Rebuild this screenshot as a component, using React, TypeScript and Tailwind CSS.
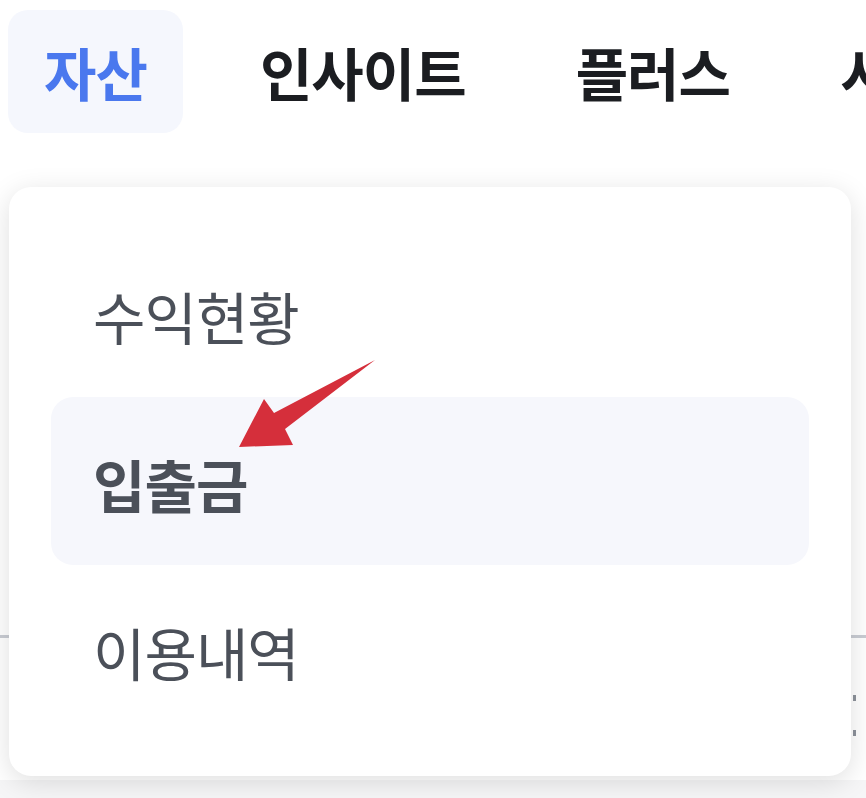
import { useState } from 'react';

const tabs = ['자산', '인사이트', '플러스', '시세'];
const menuItems = ['수익현황', '입출금', '이용내역'];

const App = () => {
  const [activeTab] = useState(0);
  const [selected] = useState(1);

  return (
    <div
      className="relative w-[866px] h-[798px] overflow-hidden bg-white"
      style={{ fontFamily: '"Noto Sans CJK KR", "Noto Sans", sans-serif' }}
    >
      {/* Content underneath the dropdown */}
      <div className="absolute left-0 right-0 top-[635px] h-[3px] bg-[#c9ccd3]" />
      <div className="absolute right-[10px] top-[695px] w-[3px] h-[6px] bg-[#8d929b]" />
      <div className="absolute right-[10px] top-[730px] w-[3px] h-[6px] bg-[#8d929b]" />
      <div className="absolute left-0 right-0 bottom-0 h-[18px] bg-[#f6f6f7]" />

      {/* Top tabs */}
      <nav className="relative flex items-center gap-[44px] pl-[8px] pt-[10px] whitespace-nowrap">
        {tabs.map((tab, i) => (
          <div
            key={tab}
            className={
              i === activeTab
                ? 'h-[123px] px-[36px] flex items-center rounded-[20px] bg-[#f5f7fd] text-[#4a78ee] text-[57px] font-bold tracking-[-1px]'
                : 'h-[123px] px-[33px] flex items-center text-[#1b1d21] text-[57px] font-bold tracking-[-1px]'
            }
          >
            {tab}
          </div>
        ))}
      </nav>

      {/* Dropdown menu */}
      <div className="relative mt-[54px] ml-[9px] w-[842px] h-[589px] p-[42px] rounded-[22px] bg-white shadow-[0_6px_28px_rgba(0,0,0,0.13)]">
        {menuItems.map((item, i) => (
          <div
            key={item}
            className={
              i === selected
                ? 'h-[168px] pl-[42px] pt-[6px] flex items-center rounded-[22px] bg-[#f6f7fc] text-[#4b5059] text-[57px] font-bold tracking-[-1px]'
                : 'h-[168px] pl-[42px] pt-[6px] flex items-center text-[#4b5059] text-[57px] font-normal tracking-[-1px]'
            }
          >
            {item}
          </div>
        ))}
      </div>

      {/* Annotation arrow */}
      <svg className="absolute left-0 top-0 pointer-events-none" width="866" height="798">
        <polygon
          points="375,360 274,413 264,399 239,447 293,445 285,429"
          fill="#d52f3b"
        />
      </svg>
    </div>
  );
};

export default App;
